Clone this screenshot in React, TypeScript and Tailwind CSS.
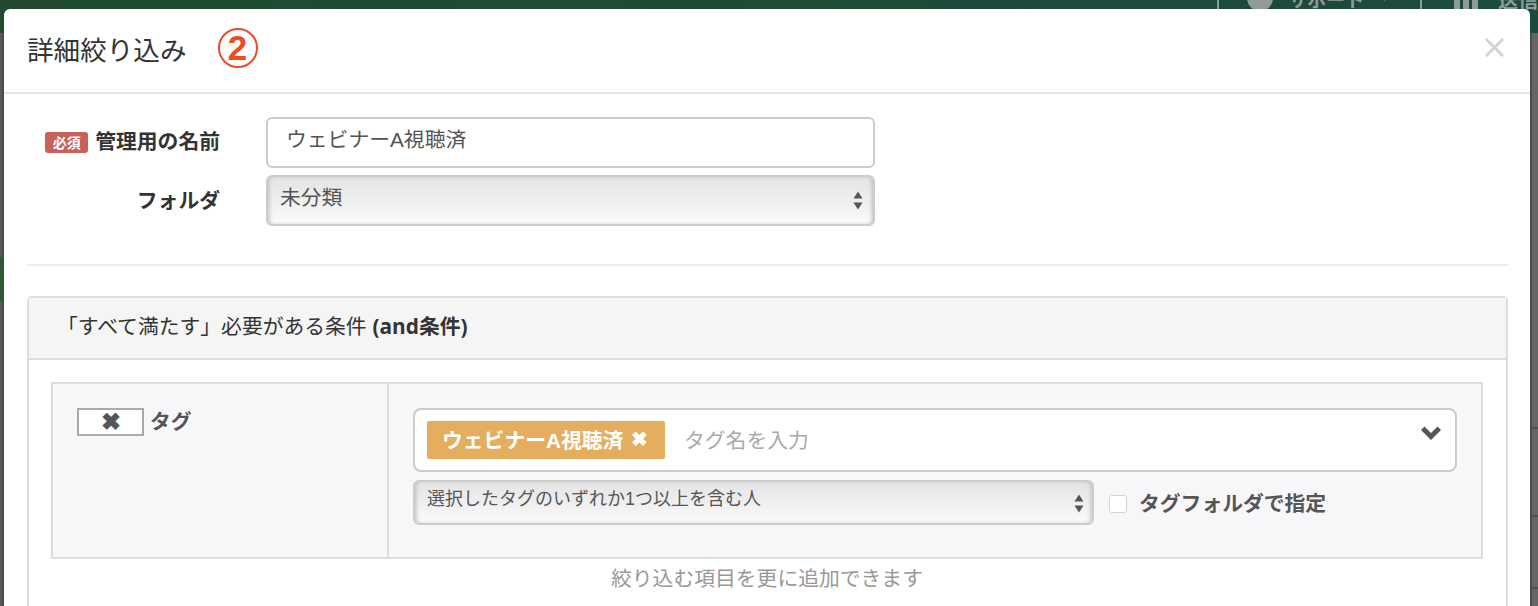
const cjk = "font-['Liberation_Sans','Noto_Sans_CJK_JP',sans-serif]";

function Arrows() {
  return (
    <svg width="10" height="19" viewBox="0 0 10 19" className="shrink-0 fill-[#555]">
      <path d="M5 0.5L9.5 7.5H0.5Z" />
      <path d="M5 18.5L9.5 11.5H0.5Z" />
    </svg>
  );
}

export default function App() {
  return (
    <div className={`flex h-[606px] w-[1538px] flex-col overflow-hidden bg-[#5a5a5a] ${cjk}`}>
      <div className="flex h-[33px] shrink-0 items-start overflow-hidden bg-gradient-to-r from-[#214a2e] to-[#1c4a3e] pl-[1217px] text-[#8f9c96]">
        <span className="h-[10px] w-[2px] bg-[#8f9c96]" />
        <span className="-mt-[17px] ml-[28px] h-[28px] w-[28px] rounded-full bg-[#8f9c96]" />
        <span className="-mt-[10px] ml-[15px] whitespace-nowrap text-[19px] font-bold leading-[22px]">サポート</span>
        <span className="-mt-[14px] ml-[14px] text-[12px] leading-[22px]">▼</span>
        <span className="ml-[30px] h-[10px] w-[2px] bg-[#8f9c96]" />
        <span className="ml-[32px] flex gap-[3px]">
          <span className="h-[9px] w-[6px] bg-[#8f9c96]" />
          <span className="h-[9px] w-[6px] bg-[#8f9c96]" />
          <span className="h-[9px] w-[6px] bg-[#8f9c96]" />
        </span>
        <span className="-mt-[10px] ml-[20px] whitespace-nowrap text-[20px] font-bold leading-[22px]">送信</span>
      </div>

      <div className="flex min-h-0 flex-1">
        <div className="flex w-1 shrink-0 flex-col bg-gradient-to-r from-[#606060] to-[#444444]">
          <div className="mt-[224px] h-[44px] bg-[#2c5a34]" />
        </div>

        <div className="relative z-10 mt-[-24px] h-[700px] w-[1526px] shrink-0 rounded-t-[6px] bg-white">
          <div className="flex h-[85px] items-center border-b-2 border-[#e5e5e5] pl-[23px]">
            <h1 className="mt-[1px] text-[26.6px] leading-none text-[#333]">詳細絞り込み</h1>
            <span className="mb-[6px] ml-[31px] flex h-[40px] w-[40px] items-center justify-center rounded-full border-2 border-[#ee4a26] text-[35px] font-bold leading-none text-[#ee4a26]">2</span>
            <svg width="19" height="19" viewBox="0 0 19 19" className="mb-[7px] ml-auto mr-[26px] stroke-[#d4d4d4] stroke-[3]">
              <path d="M1 1L18 18M18 1L1 18" />
            </svg>
          </div>

          <div className="ml-[23px] mr-[22px] flex h-[172px] flex-col border-b-2 border-[#eeeeee] pt-[23px]">
            <div className="flex h-[51px] items-center">
              <div className="flex w-[193px] items-center justify-end">
                <span className="flex h-[21px] w-[43px] items-center justify-center rounded-[3px] bg-[#c9605a] text-[14px] font-bold leading-none text-white">必須</span>
                <span className="mb-[2px] ml-[7px] text-[20.8px] font-bold text-[#333]">管理用の名前</span>
              </div>
              <div className="ml-[46px] flex h-full w-[609px] items-center rounded-[6px] border-2 border-[#cccccc] pb-[6px] pl-[18px] text-[20.8px] text-[#555]">ウェビナーA視聴済</div>
            </div>
            <div className="mt-[7px] flex h-[51px] items-center">
              <div className="w-[193px] text-right text-[20.8px] font-bold text-[#333]">フォルダ</div>
              <div className="ml-[46px] flex h-full w-[609px] items-center justify-between rounded-[6px] border-2 border-[#cccccc] bg-gradient-to-b from-[#e4e4e4] to-[#fafafa] pb-[6px] pl-3 pr-[10px] text-[20.8px] text-[#555] shadow-[inset_3px_0_4px_-2px_#bbb,inset_-3px_0_4px_-2px_#bbb]">
                <span>未分類</span>
                <span className="pt-[6px]"><Arrows /></span>
              </div>
            </div>
          </div>

          <div className="ml-[23px] mr-[22px] mt-[30px] h-[400px] rounded-t-[5px] border-2 border-[#dddddd]">
            <div className="flex h-[62px] items-center border-b-2 border-[#dddddd] bg-[#f5f5f5] pb-[2px] pl-[28px] text-[20.8px] text-[#333]">
              <span>「すべて満たす」必要がある条件 <b className="font-['Open_Sans','Noto_Sans_CJK_JP',sans-serif] font-bold">(and条件)</b></span>
            </div>
            <div className="pl-[22px] pr-[23px] pt-[22px]">
              <div className="flex h-[177px] border-2 border-[#dddddd] bg-[#f7f7f9]">
                <div className="flex w-[336px] shrink-0 items-start border-r-2 border-[#dddddd] pl-6 pt-6">
                  <span className="flex h-[28px] w-[67px] items-center justify-center border-2 border-[#aaaaaa] bg-white text-[24px] font-bold leading-none text-[#555]">✖</span>
                  <span className="ml-[6px] text-[20.8px] font-bold leading-[28px] text-[#555]">タグ</span>
                </div>
                <div className="min-w-0 flex-1 pl-6 pr-[24px] pt-6">
                  <div className="flex h-[64px] items-center justify-between rounded-[8px] border-2 border-[#cccccc] bg-white pl-3 pr-[14px]">
                    <div className="flex items-center">
                      <span className="flex h-[38px] w-[238px] items-center rounded-[2px] bg-[#e5ae5f] pl-[15px] pt-[1px] text-[20.8px] font-bold text-white">
                        ウェビナーA視聴済
                        <span className="mb-1 ml-[8px] text-[20px] leading-none">✖</span>
                      </span>
                      <span className="ml-[19px] pt-[1px] text-[20.8px] text-[#aaaaaa]">タグ名を入力</span>
                    </div>
                    <svg width="20" height="14" viewBox="0 0 20 14" className="mb-[14px] fill-[#555]">
                      <path d="M0 4L3.5 0.5L10 7L16.5 0.5L20 4L10 14Z" />
                    </svg>
                  </div>
                  <div className="mt-2 flex items-center">
                    <div className="flex h-[45px] w-[681px] items-center justify-between rounded-[6px] border-2 border-[#cccccc] bg-gradient-to-b from-[#e4e4e4] to-[#fafafa] pb-[7px] pl-3 pr-[8px] text-[18px] text-[#555] shadow-[inset_3px_0_4px_-2px_#bbb,inset_-3px_0_4px_-2px_#bbb]">
                      <span>選択したタグのいずれか1つ以上を含む人</span>
                      <span className="pt-2"><Arrows /></span>
                    </div>
                    <span className="ml-[15px] mt-[2px] h-[18px] w-[18px] rounded-[3px] border border-[#d5d5d5] bg-white" />
                    <span className="ml-[12px] mt-[2px] text-[20.8px] font-bold text-[#555]">タグフォルダで指定</span>
                  </div>
                </div>
              </div>
              <p className="mt-[4px] text-center text-[20.8px] text-[#999999]">絞り込む項目を更に追加できます</p>
            </div>
          </div>
        </div>

        <div className="flex-1 border-l-2 border-[#4c4c4c] bg-[#666666]">
          <div className="mt-[394px] h-[2px] bg-[#4f4f4f]" />
          <div className="mt-[86px] h-[2px] bg-[#4f4f4f]" />
          <div className="mt-[70px] h-[2px] bg-[#4f4f4f]" />
        </div>
      </div>
    </div>
  );
}
